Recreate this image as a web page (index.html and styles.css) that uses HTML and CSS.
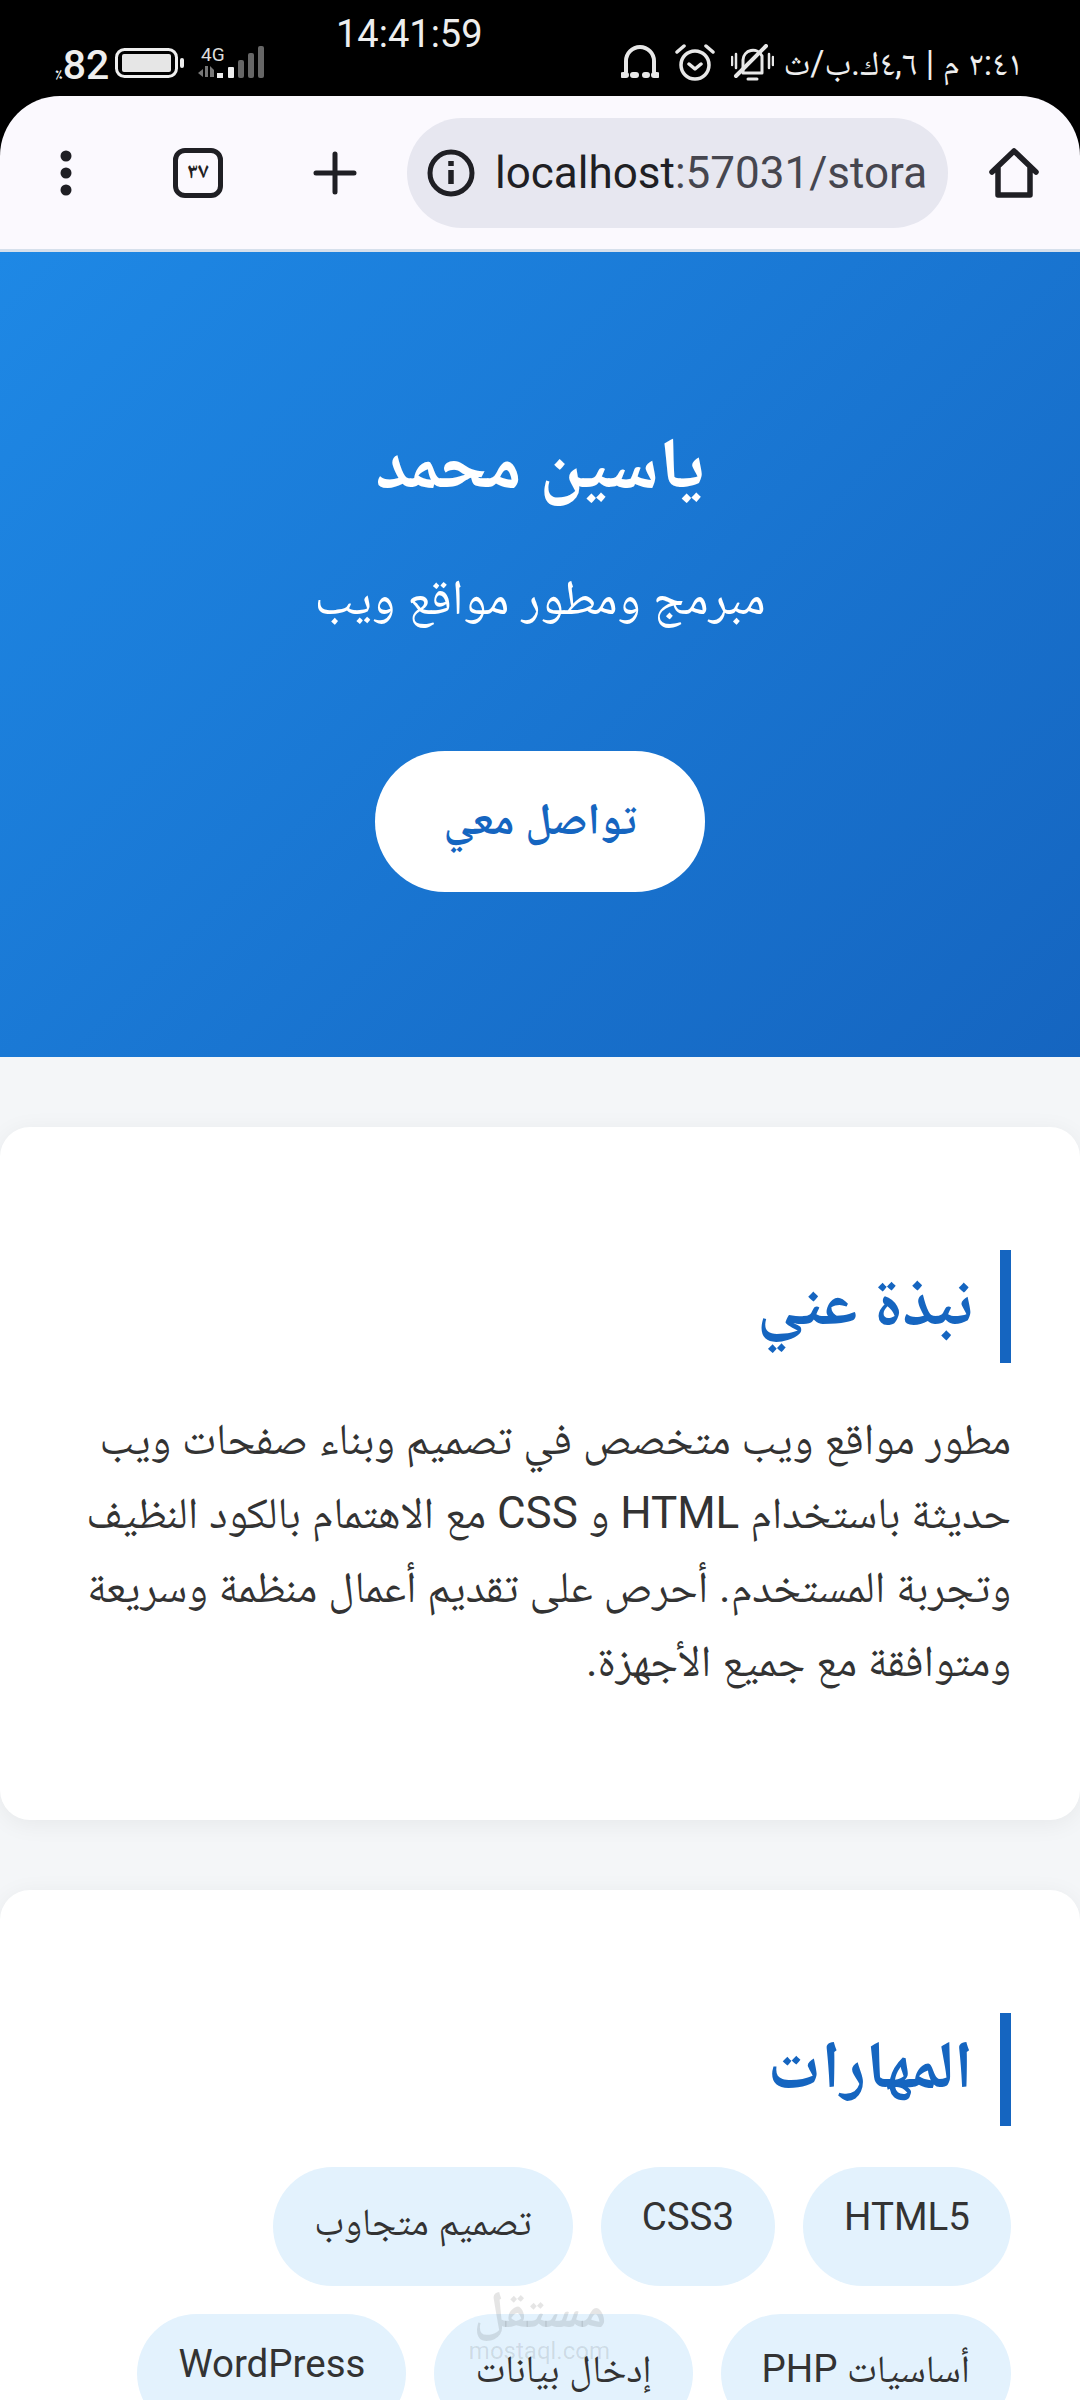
FILE: index.html
```html
<!DOCTYPE html>
<html lang="ar" dir="rtl">
<head>
    <meta charset="UTF-8">
    <meta name="viewport" content="width=device-width, initial-scale=1.0">
    <title>ياسين محمد</title>
    <link rel="stylesheet" href="styles.css">
</head>
<body>
    <div class="top-chrome" dir="ltr">
        <!-- Phone status bar -->
        <div class="status-bar">
            <div class="status-left">
                <span class="battery-text"><span class="percent">٪</span>82</span>
                <svg class="battery" width="69" height="30" viewBox="0 0 69 30">
                    <rect x="1.5" y="1.5" width="60" height="27" rx="8" fill="none" stroke="#eee" stroke-width="3"/>
                    <rect x="7" y="6" width="49" height="18" rx="2" fill="#e6e6e6"/>
                    <rect x="65" y="10" width="4" height="10" rx="2" fill="#eee"/>
                </svg>
                <svg class="signal" width="66" height="33" viewBox="0 0 66 33">
                    <text x="3" y="15" font-family="Roboto" font-size="19" fill="#ddd">4G</text>
                    <path d="M0 27l5-4v8zM7 20h3v11H7zM12 20l4 4v7h-4z" fill="#777"/>
                    <rect x="19" y="27" width="6" height="5" fill="#eee"/>
                    <rect x="30" y="21" width="6" height="11" rx="1" fill="#eee"/>
                    <rect x="40" y="14" width="6" height="18" rx="2" fill="#666"/>
                    <rect x="50" y="7" width="6" height="25" rx="2" fill="#666"/>
                    <rect x="60" y="0" width="6" height="32" rx="2" fill="#666"/>
                </svg>
            </div>
            <div class="clock">14:41:59</div>
            <div class="status-right">
                <svg width="38" height="36" viewBox="0 0 38 36" fill="none" stroke="#e8e8e8" stroke-width="4" stroke-linecap="round">
                    <path d="M5 28V17a14 14 0 0 1 28 0v11"/>
                    <path d="M2 31h3M12 31h3M24 31h2M33 31h3" stroke-width="6"/>
                </svg>
                <svg width="40" height="38" viewBox="0 0 40 38" fill="none" stroke="#e8e8e8" stroke-width="3.5" stroke-linecap="round" stroke-linejoin="round">
                    <circle cx="20" cy="21" r="14"/>
                    <path d="M14 20l6 5 6-5M2 8l7-6M38 8l-7-6"/>
                </svg>
                <svg width="43" height="38" viewBox="0 0 43 38" fill="none" stroke="#e8e8e8" stroke-width="3" stroke-linecap="round" stroke-linejoin="round">
                    <path d="M12 29V16a10 10 0 0 1 19-4v17zM17 35h9"/>
                    <path d="M5 32L35 2" stroke-width="4"/>
                    <path d="M1 13v8M5 10v14M38 10v14M42 13v8" stroke-width="2.5"/>
                </svg>
                <span class="net-speed" dir="rtl">٢:٤١ م | ٤,٦ك.ب/ث</span>
            </div>
        </div>

        <!-- Browser toolbar -->
        <div class="browser-bar">
            <svg class="dots" width="14" height="46" viewBox="0 0 14 46" fill="#1f1f24">
                <circle cx="7" cy="6" r="5.5"/>
                <circle cx="7" cy="23" r="5.5"/>
                <circle cx="7" cy="40" r="5.5"/>
            </svg>
            <div class="tab-count">٣٧</div>
            <svg class="plus" width="44" height="44" viewBox="0 0 44 44" stroke="#1f1f24" stroke-width="5" stroke-linecap="round">
                <path d="M22 3v38M3 22h38"/>
            </svg>
            <div class="url-pill">
                <svg width="48" height="48" viewBox="0 0 48 48" fill="none" stroke="#1f1f24" stroke-width="5">
                    <circle cx="24" cy="24" r="21"/>
                    <path d="M24 21v14" stroke-width="5.5"/>
                    <path d="M24 12v5" stroke-width="5.5"/>
                </svg>
                <div class="url-text">localhost<span class="url-rest">:57031/stora</span></div>
            </div>
            <svg class="home" width="50" height="50" viewBox="0 0 50 50" fill="none" stroke="#1f1f24" stroke-width="5.5" stroke-linejoin="round" stroke-linecap="round">
                <path d="M3 24L25 3l22 21M9 19v28h32V19"/>
            </svg>
        </div>
    </div>

    <!-- Hero -->
    <header class="hero">
        <h1>ياسين محمد</h1>
        <p>مبرمج ومطور مواقع ويب</p>
        <a class="hero-btn" href="#">تواصل معي</a>
    </header>

    <!-- About -->
    <section class="card about">
        <h2>نبذة عني</h2>
        <p class="about-text">مطور مواقع ويب متخصص في تصميم وبناء صفحات ويب حديثة باستخدام HTML و CSS مع الاهتمام بالكود النظيف وتجربة المستخدم. أحرص على تقديم أعمال منظمة وسريعة ومتوافقة مع جميع الأجهزة.</p>
    </section>

    <!-- Skills -->
    <section class="card">
        <h2>المهارات</h2>
        <div class="skills">
            <span class="skill">HTML5</span>
            <span class="skill">CSS3</span>
            <span class="skill">تصميم متجاوب</span>
            <span class="skill">أساسيات PHP</span>
            <span class="skill">إدخال بيانات</span>
            <span class="skill">WordPress</span>
        </div>
    </section>

    <div class="watermark">
        <div class="wm-ar">مستقل</div>
        <div class="wm-en">mostaql.com</div>
    </div>
</body>
</html>
```

FILE: styles.css
```css
* {
    margin: 0;
    padding: 0;
    box-sizing: border-box;
}
html, body {
    height: 2400px;
    overflow: hidden;
}
body {
    position: relative;
    font-family: Roboto, "Noto Naskh Arabic", "Noto Sans", "DejaVu Sans", sans-serif;
    background-color: #f4f6f8;
    color: #333;
}

.top-chrome {
    background-color: #000;
}

/* status bar */
.status-bar {
    height: 96px;
    color: #eee;
    display: flex;
    padding: 0 57px 0 55px;
}
.status-left {
    width: 209px;
    display: flex;
    align-items: flex-start;
    padding-top: 46px;
}
.battery-text {
    font-size: 41px;
    font-weight: 500;
    line-height: 38px;
    width: 60px;
    white-space: nowrap;
}
.percent {
    font-size: 18px;
}
.battery {
    margin-top: 2px;
}
.signal {
    margin-left: 14px;
}
.clock {
    font-size: 38px;
    line-height: 44px;
    margin-top: 12px;
    margin-left: 72px;
}
.status-right {
    display: flex;
    align-items: flex-start;
    gap: 16px;
    padding-top: 44px;
    margin-left: auto;
}
.net-speed {
    font-size: 34.5px;
    line-height: 38px;
    margin-left: -6px;
    white-space: nowrap;
}

/* browser toolbar */
.browser-bar {
    height: 156px;
    background-color: #fbf9fe;
    border-bottom: 3px solid #d6e0ec;
    border-radius: 60px 60px 0 0;
    display: flex;
    align-items: center;
    padding: 0 41px 0 59px;
}
.dots {
    margin-right: 100px;
}
.tab-count {
    width: 50px;
    height: 50px;
    border: 5px solid #1f1f24;
    border-radius: 12px;
    font-size: 22px;
    font-weight: 700;
    color: #1f1f24;
    display: flex;
    align-items: center;
    justify-content: center;
    margin-right: 90px;
}
.plus {
    margin-right: 50px;
}
.url-pill {
    width: 541px;
    height: 110px;
    background-color: #e7e7f0;
    border-radius: 55px;
    display: flex;
    align-items: center;
    gap: 20px;
    padding-left: 20px;
    margin-right: 41px;
    overflow: hidden;
}
.url-text {
    font-size: 44px;
    color: #1f1f24;
    white-space: nowrap;
}
.url-rest {
    color: #46464f;
}

/* hero */
.hero {
    height: 805px;
    background: linear-gradient(135deg, #1e88e5, #1565c0);
    color: #fff;
    text-align: center;
    padding-top: 164px;
}
.hero h1 {
    font-size: 72px;
    font-weight: 700;
    line-height: 96px;
}
.hero p {
    font-size: 49.5px;
    line-height: 68px;
    margin-top: 51px;
}
.hero-btn {
    display: block;
    width: 330px;
    height: 141px;
    margin: 120px auto 0;
    background-color: #fff;
    color: #1565c0;
    border-radius: 70px;
    font-size: 44px;
    font-weight: 700;
    line-height: 136px;
    text-decoration: none;
}

/* cards */
.card {
    background-color: #fff;
    border-radius: 30px;
    margin-top: 70px;
    padding: 123px 69px 69px;
    box-shadow: 0 4px 24px rgba(0,0,0,0.06);
}
.about {
    padding-bottom: 122px;
}
.card h2 {
    border-right: 11px solid #1565c0;
    padding: 0 27px 8px 0;
    color: #1565c0;
    font-size: 67px;
    font-weight: 700;
    line-height: 105px;
    margin-bottom: 41px;
}
.about-text {
    font-size: 44px;
    line-height: 74px;
    color: #333;
    margin-top: -2px;
}
.skills {
    display: flex;
    flex-wrap: wrap;
    gap: 28px;
}
.skill {
    background-color: #e3f2fd;
    border-radius: 60px;
    padding: 27px 41px;
    font-size: 38.5px;
}

/* site watermark */
.watermark {
    position: absolute;
    left: 470px;
    top: 2282px;
    width: 140px;
    text-align: center;
    color: rgba(0,0,0,0.1);
}
.wm-ar {
    font-size: 52px;
    font-weight: 700;
    line-height: 56px;
}
.wm-en {
    font-size: 24px;
    line-height: 26px;
}
```
